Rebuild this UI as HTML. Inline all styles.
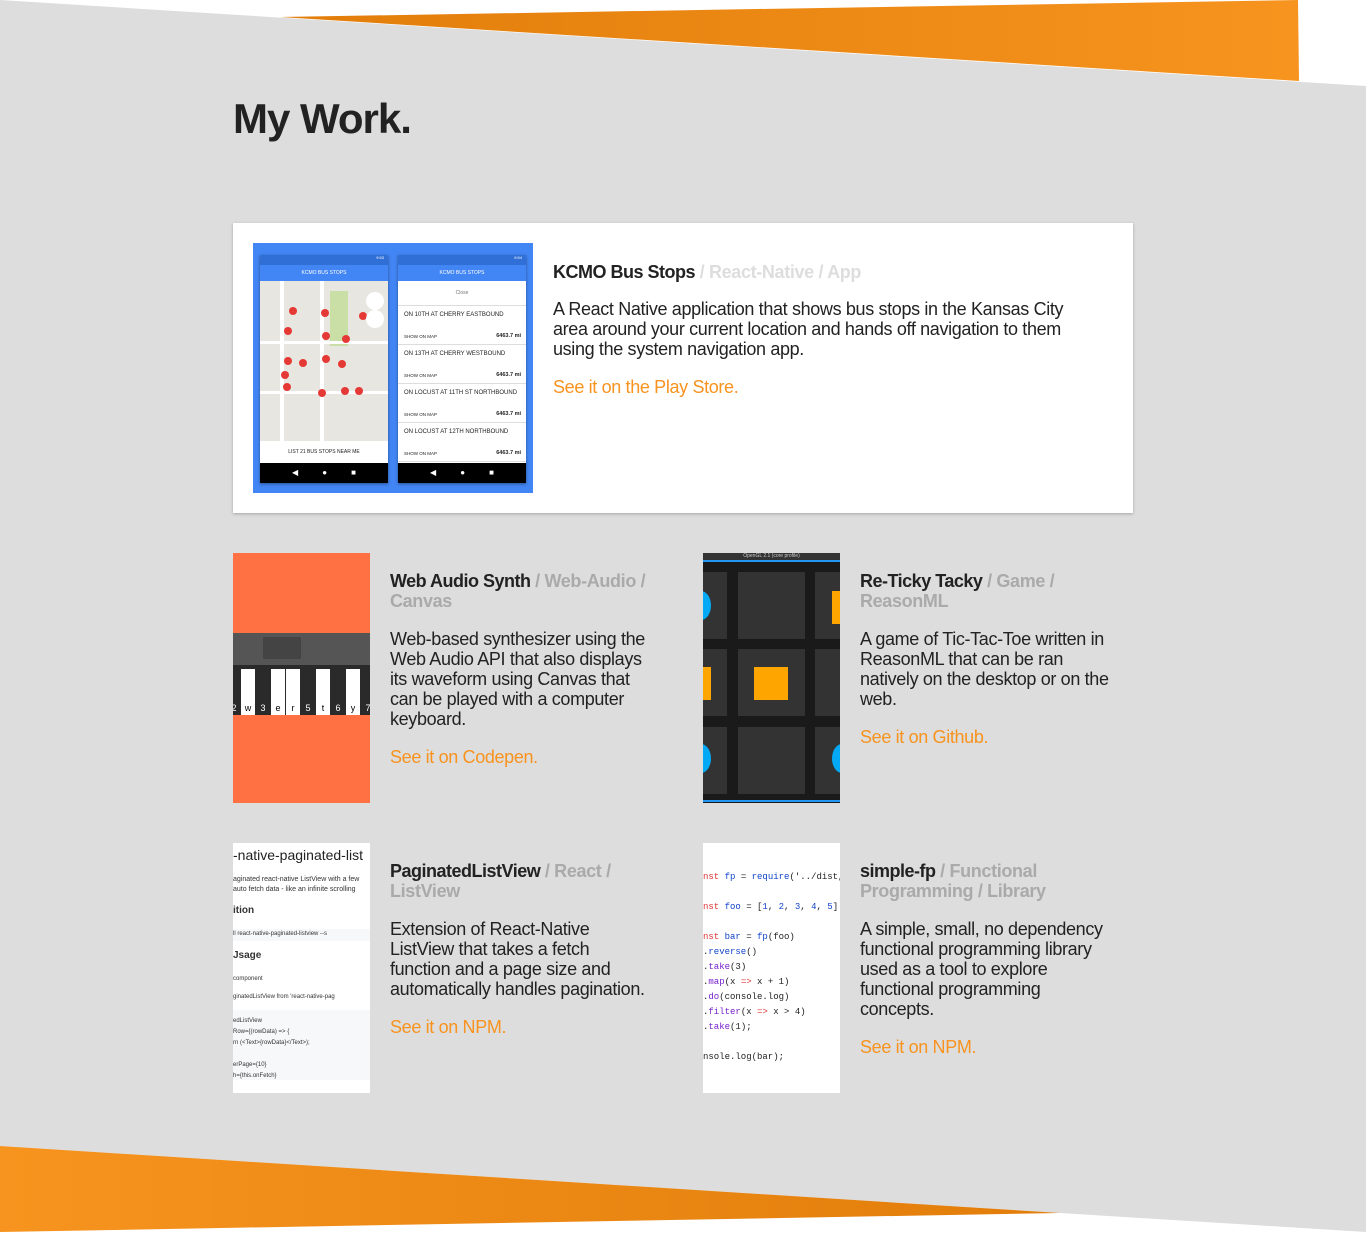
<!DOCTYPE html>
<html><head><meta charset="utf-8"><style>
*{margin:0;padding:0;box-sizing:border-box}
body{width:1366px;height:1233px;position:relative;overflow:hidden;background:#fff;font-family:"Liberation Sans",sans-serif;color:#222}
.abs{position:absolute}
h1{position:absolute;left:233px;top:95px;font-size:42px;font-weight:bold;letter-spacing:-1px;color:#222}
.t{position:absolute;font-size:18px;line-height:20px;white-space:nowrap;letter-spacing:-0.35px}
.t b{color:#222;letter-spacing:-0.5px}
.tag{color:#aaa;font-weight:bold}
.link{color:#f7931e}
.card{left:233px;top:223px;width:900px;height:290px;background:#fff;box-shadow:0 1px 3px rgba(0,0,0,.25)}
.img{position:absolute;overflow:hidden}
.phone{position:absolute;top:12px;width:128px;height:228px;background:#fff;box-shadow:0 1px 3px rgba(0,0,0,.4)}
.row{border-bottom:1px solid #ddd;height:39px;font-size:6px;padding:6px 6px;position:relative;color:#222;white-space:nowrap}
.row span{position:absolute;bottom:5px;left:6px;font-size:4.5px}
.row i{position:absolute;bottom:5px;right:5px;font-size:5.5px;font-style:normal;font-weight:bold}
.cell{position:absolute;width:67px;height:67px;background:#333}
.code{font-family:"Liberation Mono",monospace;font-size:9px;line-height:15px;color:#222;white-space:pre}
.nav{position:absolute;bottom:0;left:0;width:128px;height:20px;background:#000;color:#fff;font-size:8px;line-height:20px;display:flex;justify-content:space-around;padding:0 20px}
</style></head><body>
<svg class="abs" style="left:0;top:0" width="1366" height="1233">
<defs>
<linearGradient id="g1" x1="0" x2="1"><stop offset="0" stop-color="#e27d0a"/><stop offset="1" stop-color="#f6941f"/></linearGradient>
<linearGradient id="g2" x1="0" x2="1"><stop offset="0" stop-color="#f6941f"/><stop offset="1" stop-color="#e27d0a"/></linearGradient>
</defs>
<polygon points="0,0 1366,86 1366,1233 0,1233" fill="#dddddd"/>
<polygon points="280,17 1298,0 1299,81" fill="url(#g1)"/>
<polygon points="0,1146 1060,1213 1366,1232 1366,1233 0,1233" fill="#fff"/>
<polygon points="0,1146 1060,1213 0,1232" fill="url(#g2)"/>
</svg>
<h1>My Work.</h1>

<div class="abs card">
 <div class="img" style="left:20px;top:20px;width:280px;height:250px;background:#4285f4">
  <div class="phone" style="left:7px">
   <div style="height:10px;background:#2f6fd6;font-size:4px;color:#fff;text-align:right;padding-right:4px">9:53</div>
   <div style="height:16px;background:#4285f4;font-size:5px;color:#fff;text-align:center;line-height:16px">KCMO BUS STOPS</div>
   <div style="height:160px;background:#e8e6e0;position:relative">
    <div class="abs" style="left:70px;top:10px;width:18px;height:55px;background:#c9dfa5"></div>
    <div class="abs" style="left:20px;top:0;width:4px;height:160px;background:#fff"></div>
    <div class="abs" style="left:60px;top:0;width:4px;height:160px;background:#fff"></div>
    <div class="abs" style="left:0;top:60px;width:128px;height:3px;background:#fff"></div>
    <div class="abs" style="left:0;top:110px;width:128px;height:3px;background:#fff"></div>
    <svg class="abs" style="left:0;top:0" width="128" height="160" fill="#e53935">
     <circle cx="33" cy="30" r="4"/><circle cx="65" cy="32" r="4"/><circle cx="103" cy="35" r="4"/><circle cx="28" cy="50" r="4"/><circle cx="66" cy="55" r="4"/><circle cx="86" cy="58" r="4"/><circle cx="28" cy="80" r="4"/><circle cx="43" cy="82" r="4"/><circle cx="66" cy="78" r="4"/><circle cx="82" cy="83" r="4"/><circle cx="25" cy="94" r="4"/><circle cx="27" cy="106" r="4"/><circle cx="62" cy="112" r="4"/><circle cx="85" cy="110" r="4"/><circle cx="99" cy="110" r="4"/>
     <circle cx="115" cy="20" r="9" fill="#fff"/><circle cx="115" cy="38" r="9" fill="#fff"/>
    </svg>
   </div>
   <div style="height:22px;font-size:5px;text-align:center;line-height:22px">LIST 21 BUS STOPS NEAR ME</div>
   <div class="nav"><span>◀</span><span>●</span><span>■</span></div>
  </div>
  <div class="phone" style="left:145px">
   <div style="height:10px;background:#2f6fd6;font-size:4px;color:#fff;text-align:right;padding-right:4px">9:54</div>
   <div style="height:16px;background:#4285f4;font-size:5px;color:#fff;text-align:center;line-height:16px">KCMO BUS STOPS</div>
   <div style="height:25px;border-bottom:1px solid #ddd;font-size:5px;color:#777;text-align:center;line-height:25px">Close</div>
   <div class="row">ON 10TH AT CHERRY EASTBOUND<span>SHOW ON MAP</span><i>6463.7 mi</i></div>
   <div class="row">ON 13TH AT CHERRY WESTBOUND<span>SHOW ON MAP</span><i>6463.7 mi</i></div>
   <div class="row">ON LOCUST AT 11TH ST NORTHBOUND<span>SHOW ON MAP</span><i>6463.7 mi</i></div>
   <div class="row">ON LOCUST AT 12TH NORTHBOUND<span>SHOW ON MAP</span><i>6463.7 mi</i></div>
   <div class="nav"><span>◀</span><span>●</span><span>■</span></div>
  </div>
 </div>
</div>
<div class="t" style="left:553px;top:262px"><b>KCMO Bus Stops</b> <span class="tag" style="color:#ddd">/ React-Native / App</span></div>
<div class="t" style="left:553px;top:299px">A React Native application that shows bus stops in the Kansas City<br>area around your current location and hands off navigation to them<br>using the system navigation app.</div>
<div class="t link" style="left:553px;top:377px">See it on the Play Store.</div>

<!-- Web audio -->
<div class="img" style="left:233px;top:553px;width:137px;height:250px;background:#ff7043">
 <div class="abs" style="left:0;top:80px;width:137px;height:32px;background:#555"></div>
 <div class="abs" style="left:30px;top:84px;width:38px;height:22px;background:#444"></div>
 <div class="abs" style="left:0;top:112px;width:137px;height:50px;background:#2a2a2a"></div>
 <svg class="abs" style="left:0;top:116px" width="137" height="46" font-size="9" font-family="Liberation Sans" text-anchor="middle">
  <rect x="8" y="0" width="14" height="46" fill="#fff"/><rect x="38" y="0" width="14" height="46" fill="#fff"/><rect x="53" y="0" width="14" height="46" fill="#fff"/><rect x="83" y="0" width="14" height="46" fill="#fff"/><rect x="113" y="0" width="14" height="46" fill="#fff"/>
  <text x="1" y="42" fill="#fff">2</text><text x="15" y="42">w</text><text x="30" y="42" fill="#fff">3</text><text x="45" y="42">e</text><text x="60" y="42">r</text><text x="75" y="42" fill="#fff">5</text><text x="90" y="42">t</text><text x="105" y="42" fill="#fff">6</text><text x="120" y="42">y</text><text x="135" y="42" fill="#fff">7</text>
 </svg>
</div>
<div class="t" style="left:390px;top:571px"><b>Web Audio Synth</b> <span class="tag">/ Web-Audio /<br>Canvas</span></div>
<div class="t" style="left:390px;top:629px">Web-based synthesizer using the<br>Web Audio API that also displays<br>its waveform using Canvas that<br>can be played with a computer<br>keyboard.</div>
<div class="t link" style="left:390px;top:747px">See it on Codepen.</div>

<!-- Tic tac -->
<div class="img" style="left:703px;top:553px;width:137px;height:250px;background:#1a1a1a">
 <div class="abs" style="left:0;top:0;width:137px;height:7px;background:#333;font-size:5px;color:#ccc;text-align:center;line-height:7px">OpenGL 2.1 (core profile)</div>
 <div class="abs" style="left:0;top:7px;width:137px;height:2px;background:#2196f3"></div>
 <div class="cell" style="left:-43px;top:19px"></div><div class="cell" style="left:35px;top:19px"></div><div class="cell" style="left:112px;top:19px"></div>
 <div class="cell" style="left:-43px;top:96px"></div><div class="cell" style="left:35px;top:96px"></div><div class="cell" style="left:112px;top:96px"></div>
 <div class="cell" style="left:-43px;top:174px"></div><div class="cell" style="left:35px;top:174px"></div><div class="cell" style="left:112px;top:174px"></div>
 <div class="abs" style="left:-12px;top:38px;width:20px;height:29px;border-radius:50%;background:#03a9f4"></div>
 <div class="abs" style="left:129px;top:38px;width:12px;height:33px;background:#ffa500"></div>
 <div class="abs" style="left:-4px;top:114px;width:12px;height:33px;background:#ffa500"></div>
 <div class="abs" style="left:51px;top:114px;width:34px;height:33px;background:#ffa500"></div>
 <div class="abs" style="left:-12px;top:191px;width:20px;height:29px;border-radius:50%;background:#03a9f4"></div>
 <div class="abs" style="left:129px;top:191px;width:20px;height:29px;border-radius:50%;background:#03a9f4"></div>
 <div class="abs" style="left:0;top:247px;width:137px;height:2px;background:#2196f3"></div>
</div>
<div class="t" style="left:860px;top:571px"><b>Re-Ticky Tacky</b> <span class="tag">/ Game /<br>ReasonML</span></div>
<div class="t" style="left:860px;top:629px">A game of Tic-Tac-Toe written in<br>ReasonML that can be ran<br>natively on the desktop or on the<br>web.</div>
<div class="t link" style="left:860px;top:727px">See it on Github.</div>

<!-- Paginated -->
<div class="img" style="left:233px;top:843px;width:137px;height:250px;background:#fff;font-size:7px;line-height:10px;color:#333;white-space:nowrap">
 <div class="abs" style="left:0;top:3px;font-size:14px;line-height:18px;color:#222">-native-paginated-list</div>
 <div class="abs" style="left:0;top:32px">aginated react-native ListView with a few<br>auto fetch data - like an infinite scrolling</div>
 <div class="abs" style="left:0;top:63px;font-size:10px;font-weight:bold">ition</div>
 <div class="abs" style="left:0;top:86px;width:137px;height:12px;background:#f6f8fa;font-size:6px">ll react-native-paginated-listview --s</div>
 <div class="abs" style="left:0;top:108px;font-size:10px;font-weight:bold">Jsage</div>
 <div class="abs" style="left:0;top:131px;font-size:6px">component</div>
 <div class="abs" style="left:0;top:149px;font-size:6px">ginatedListView from 'react-native-pag</div>
 <div class="abs" style="left:0;top:167px;width:137px;height:70px;background:#f6f8fa;font-size:6px;line-height:11px;padding-top:6px">edListView<br>Row={(rowData) => {<br>rn (&lt;Text&gt;{rowData}&lt;/Text&gt;);<br><br>erPage={10}<br>h={this.onFetch}</div>
</div>
<div class="t" style="left:390px;top:861px"><b>PaginatedListView</b> <span class="tag">/ React /<br>ListView</span></div>
<div class="t" style="left:390px;top:919px">Extension of React-Native<br>ListView that takes a fetch<br>function and a page size and<br>automatically handles pagination.</div>
<div class="t link" style="left:390px;top:1017px">See it on NPM.</div>

<!-- simple-fp -->
<div class="img" style="left:703px;top:843px;width:137px;height:250px;background:#fff">
 <div class="abs code" style="left:0;top:27px"><span style="color:#d33">nst</span> <span style="color:#14c">fp</span> = <span style="color:#14c">require</span>('../dist,

<span style="color:#d33">nst</span> <span style="color:#14c">foo</span> = [<span style="color:#14c">1</span>, <span style="color:#14c">2</span>, <span style="color:#14c">3</span>, <span style="color:#14c">4</span>, <span style="color:#14c">5</span>]

<span style="color:#d33">nst</span> <span style="color:#14c">bar</span> = <span style="color:#14c">fp</span>(foo)
.<span style="color:#14c">reverse</span>()
.<span style="color:#72c">take</span>(3)
.<span style="color:#72c">map</span>(x <span style="color:#d33">=&gt;</span> x + 1)
.<span style="color:#72c">do</span>(console.log)
.<span style="color:#72c">filter</span>(x <span style="color:#d33">=&gt;</span> x &gt; 4)
.<span style="color:#72c">take</span>(1);

nsole.log(bar);</div>
</div>
<div class="t" style="left:860px;top:861px"><b>simple-fp</b> <span class="tag">/ Functional<br>Programming / Library</span></div>
<div class="t" style="left:860px;top:919px">A simple, small, no dependency<br>functional programming library<br>used as a tool to explore<br>functional programming<br>concepts.</div>
<div class="t link" style="left:860px;top:1037px">See it on NPM.</div>
</body></html>
